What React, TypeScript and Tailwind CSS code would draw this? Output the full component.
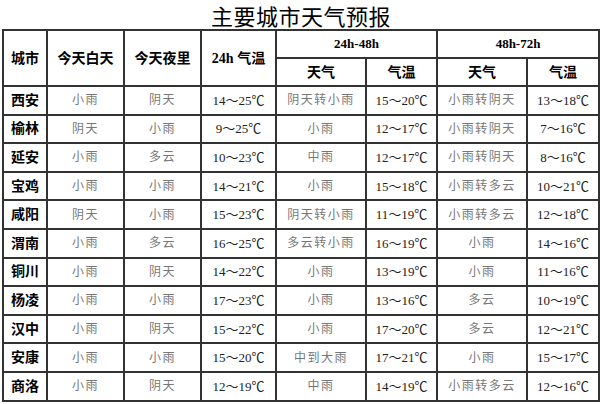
const rows: string[][] = [
  ["西安", "小雨", "阴天", "14～25℃", "阴天转小雨", "15～20℃", "小雨转阴天", "13～18℃"],
  ["榆林", "阴天", "小雨", "9～25℃", "小雨", "12～17℃", "小雨转阴天", "7～16℃"],
  ["延安", "小雨", "多云", "10～23℃", "中雨", "12～17℃", "小雨转阴天", "8～16℃"],
  ["宝鸡", "小雨", "小雨", "14～21℃", "小雨", "15～18℃", "小雨转多云", "10～21℃"],
  ["咸阳", "阴天", "小雨", "15～23℃", "阴天转小雨", "11～19℃", "小雨转多云", "12～18℃"],
  ["渭南", "小雨", "多云", "16～25℃", "多云转小雨", "16～19℃", "小雨", "14～16℃"],
  ["铜川", "小雨", "阴天", "14～22℃", "小雨", "13～19℃", "小雨", "11～16℃"],
  ["杨凌", "小雨", "小雨", "17～23℃", "小雨", "13～16℃", "多云", "10～19℃"],
  ["汉中", "小雨", "阴天", "15～22℃", "小雨", "17～20℃", "多云", "12～21℃"],
  ["安康", "小雨", "小雨", "15～20℃", "中到大雨", "17～21℃", "小雨", "15～17℃"],
  ["商洛", "小雨", "阴天", "12～19℃", "中雨", "14～19℃", "小雨转多云", "12～16℃"],
];

const serif = "font-['Liberation_Serif','Noto_Sans_CJK_SC',serif]";
const cell = "border-2 border-[#333] text-center align-middle p-0";

export default function App() {
  return (
    <div className="w-[602px] h-[404px] bg-white overflow-hidden">
      <div className="h-[29px] flex items-center justify-center">
        <h1 className="text-[22px] leading-none text-black font-['Noto_Sans_CJK_SC',sans-serif] tracking-[0.5px]">
          主要城市天气预报
        </h1>
      </div>
      <table className={`ml-[2px] w-[596px] border-collapse table-fixed ${serif}`}>
        <colgroup>
          <col className="w-[44px]" />
          <col className="w-[77px]" />
          <col className="w-[77px]" />
          <col className="w-[75px]" />
          <col className="w-[90px]" />
          <col className="w-[71px]" />
          <col className="w-[90px]" />
          <col className="w-[72px]" />
        </colgroup>
        <thead className="text-[14px] font-bold text-black">
          <tr className="h-[28px]">
            <th rowSpan={2} className={cell}>城市</th>
            <th rowSpan={2} className={cell}>今天白天</th>
            <th rowSpan={2} className={cell}>今天夜里</th>
            <th rowSpan={2} className={cell}>24h 气温</th>
            <th colSpan={2} className={`${cell} text-[13px]`}>24h-48h</th>
            <th colSpan={2} className={`${cell} text-[13px]`}>48h-72h</th>
          </tr>
          <tr className="h-[28px]">
            <th className={`${cell} font-semibold`}>天气</th>
            <th className={`${cell} font-semibold`}>气温</th>
            <th className={`${cell} font-semibold`}>天气</th>
            <th className={`${cell} font-semibold`}>气温</th>
          </tr>
        </thead>
        <tbody>
          {rows.map((r) => (
            <tr key={r[0]} className="h-[28.6px]">
              <td className={`${cell} text-[14px] font-bold text-black`}>{r[0]}</td>
              {r.slice(1).map((v, i) => {
                // columns 2, 4, 6 of the slice hold temperatures
                const isTemp = i === 2 || i === 4 || i === 6;
                return (
                  <td
                    key={i}
                    className={`${cell} leading-none ${
                      isTemp
                        ? "text-[13px] text-[#222]"
                        : "text-[12px] text-[#777] tracking-[1.5px]"
                    }`}
                  >
                    {v}
                  </td>
                );
              })}
            </tr>
          ))}
        </tbody>
      </table>
    </div>
  );
}
